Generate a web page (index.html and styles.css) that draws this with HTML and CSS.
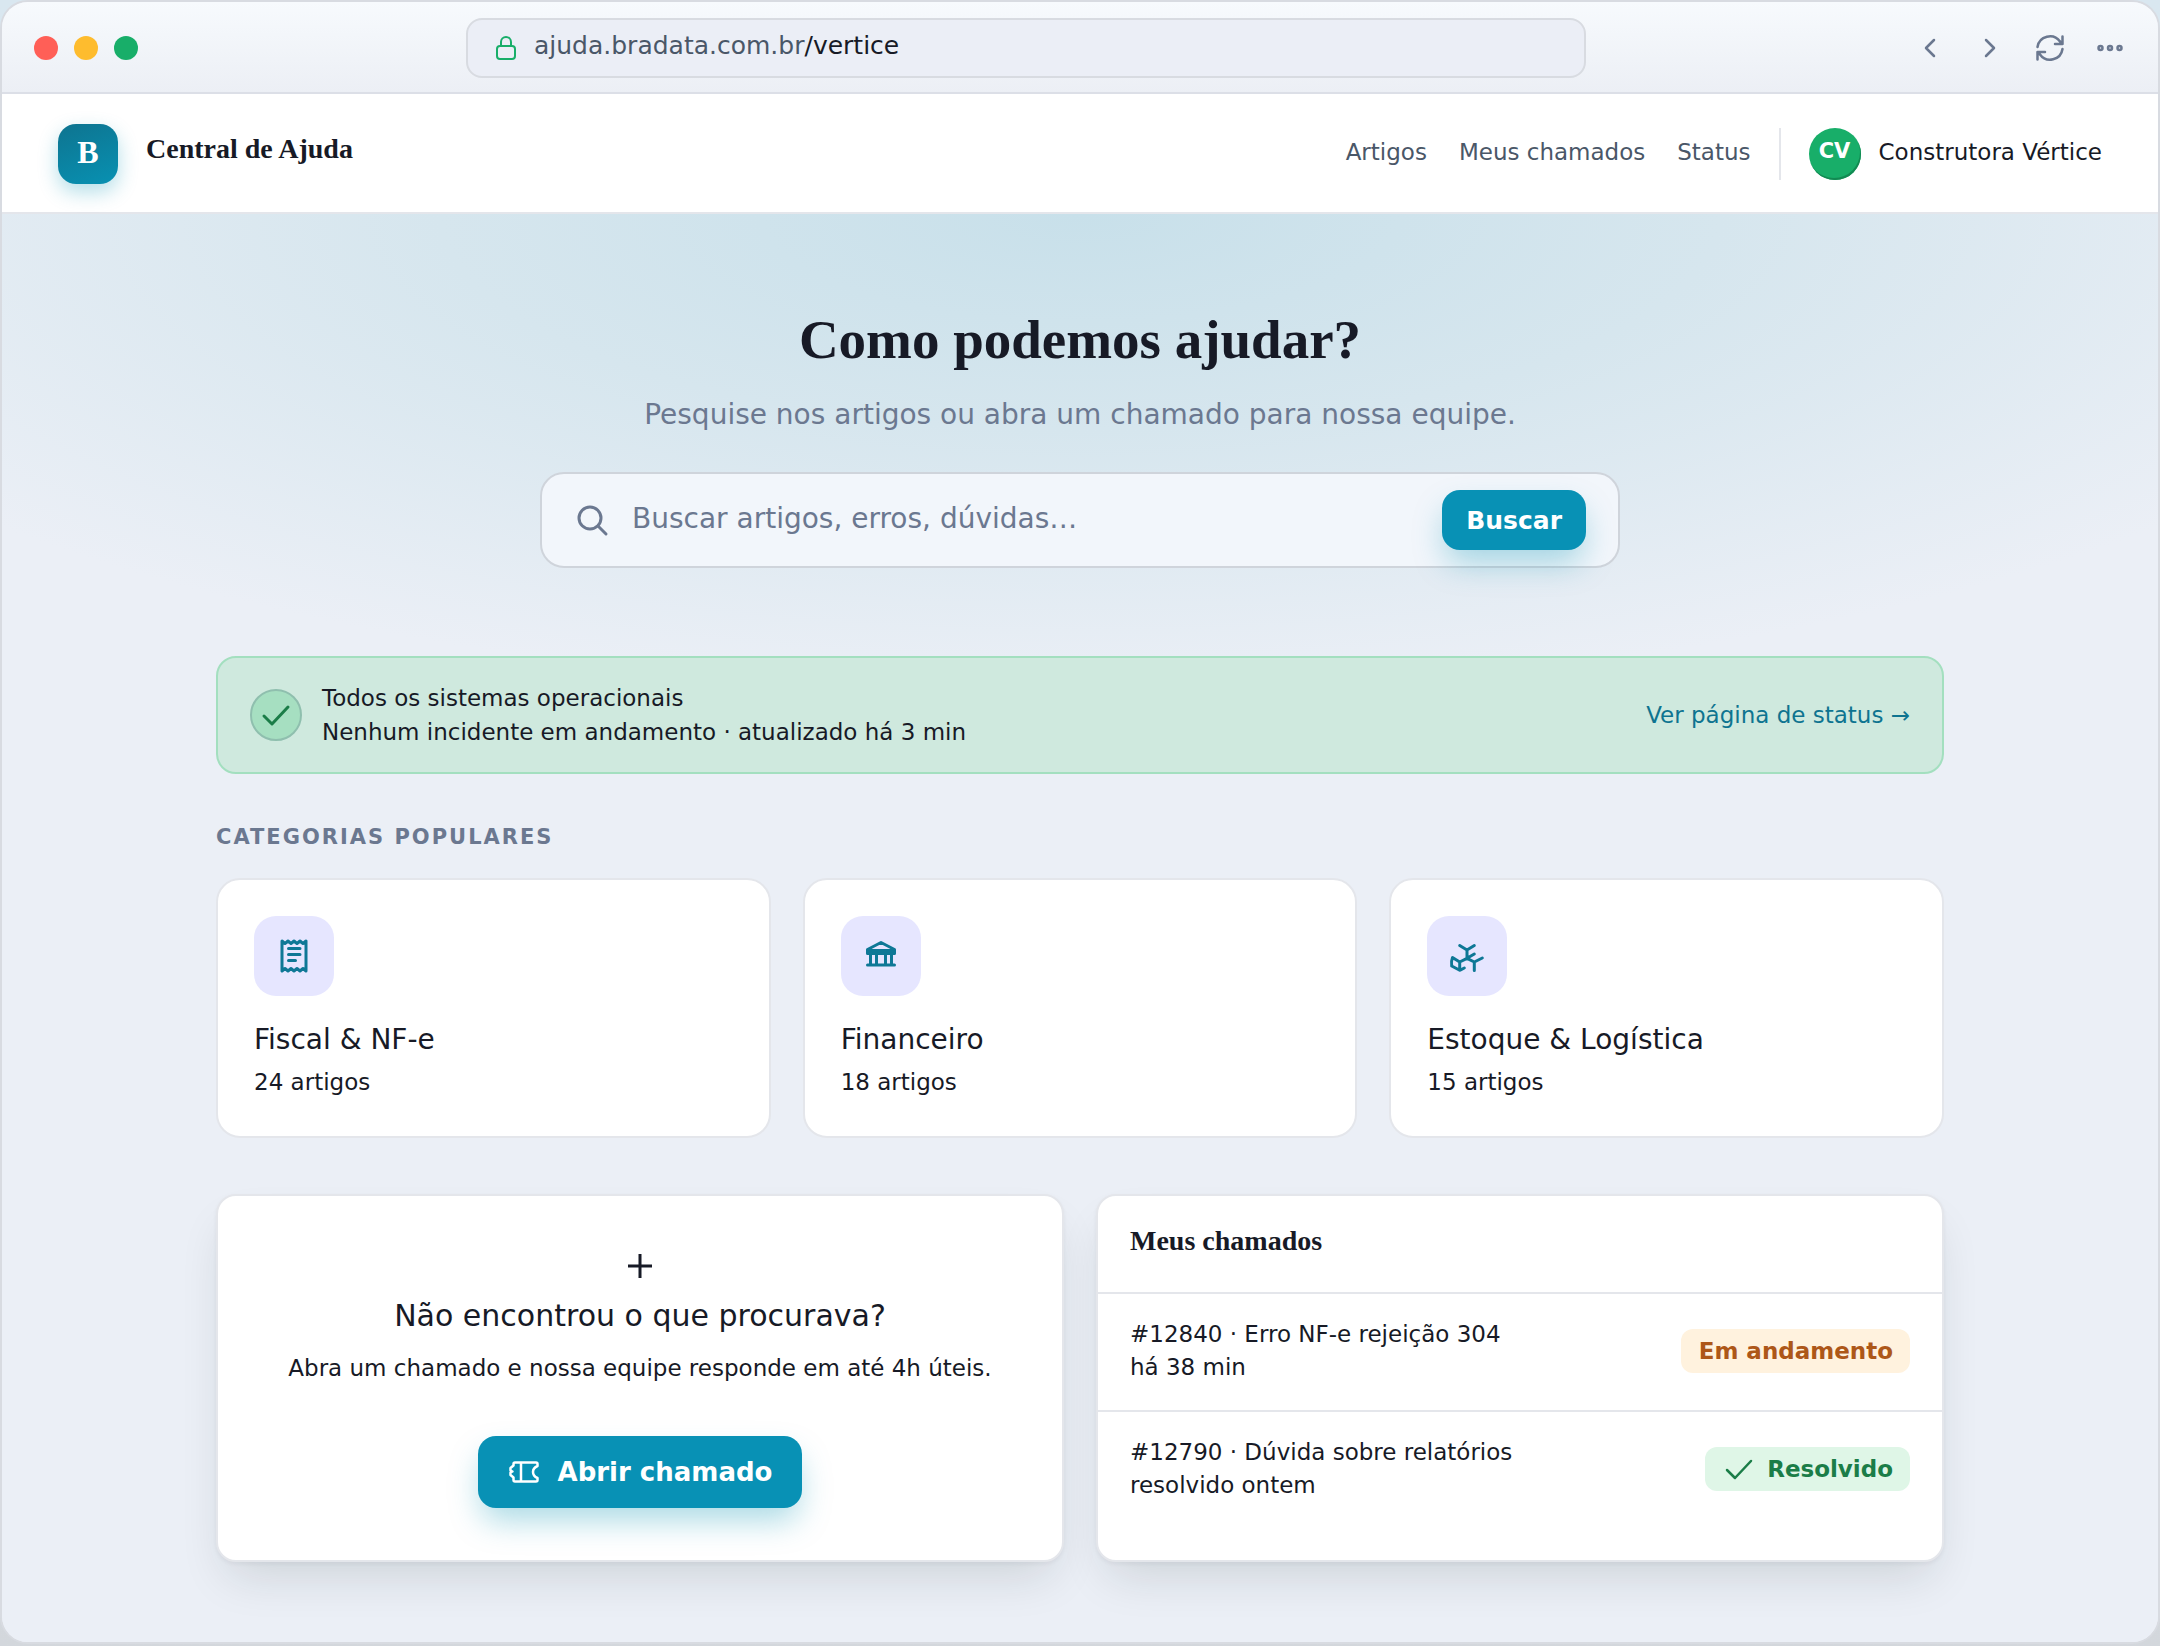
FILE: index.html
```html
<!DOCTYPE html>
<html lang="pt-BR">
<head>
    <meta charset="UTF-8">
    <meta name="viewport" content="width=device-width, initial-scale=1.0">
    <title>Central de Ajuda</title>
    <link rel="stylesheet" href="styles.css">
</head>
<body>

<div class="window">
    <div class="titlebar">
        <div class="dots">
            <span class="dot red"></span>
            <span class="dot yellow"></span>
            <span class="dot green"></span>
        </div>
        <div class="url">
            <svg class="lock" viewBox="0 0 24 28"><rect x="3" y="12" width="18" height="13" rx="3"/><path d="M7 12V8a5 5 0 0 1 10 0v4"/></svg>
            <span>ajuda.bradata.com.br<b>/vertice</b></span>
        </div>
        <div class="controls">
            <button type="button" aria-label="Voltar"><svg viewBox="0 0 32 32"><path d="M20 8l-8 8 8 8"/></svg></button>
            <button type="button" aria-label="Avançar"><svg viewBox="0 0 32 32"><path d="M12 8l8 8-8 8"/></svg></button>
            <button type="button" aria-label="Recarregar"><svg viewBox="0 0 32 32"><path d="M3.5 15A12.5 12.5 0 0 1 26 9.5L28.5 12M28.5 4.5V12H21M28.5 17A12.5 12.5 0 0 1 6 22.5L3.5 20M3.5 27.5V20H11"/></svg></button>
            <button type="button" aria-label="Mais"><svg viewBox="0 0 32 32"><circle cx="6.5" cy="16" r="2"/><circle cx="16" cy="16" r="2"/><circle cx="25.5" cy="16" r="2"/></svg></button>
        </div>
    </div>

    <header class="header">
        <div class="logo">B</div>
        <div class="brand">Central de Ajuda</div>
        <nav class="nav">
            <a href="#">Artigos</a>
            <a href="#">Meus chamados</a>
            <a href="#">Status</a>
        </nav>
        <div class="account">
            <span class="avatar">CV</span>
            <span>Construtora Vértice</span>
        </div>
    </header>

    <main>
        <section class="hero">
            <h1>Como podemos ajudar?</h1>
            <p>Pesquise nos artigos ou abra um chamado para nossa equipe.</p>
            <form class="search">
                <svg viewBox="0 0 36 36"><circle cx="16" cy="16" r="11"/><path d="M24 24l8 8"/></svg>
                <input type="search" aria-label="Buscar" placeholder="Buscar artigos, erros, dúvidas…">
                <button type="button" class="btn">Buscar</button>
            </form>
        </section>

        <div class="container">
            <div class="status">
                <span class="status-icon"><svg viewBox="0 0 32 32"><path d="M4 17l8 8L28 8"/></svg></span>
                <div class="status-text">
                    <div>Todos os sistemas operacionais</div>
                    <div>Nenhum incidente em andamento · atualizado há 3 min</div>
                </div>
                <a href="#">Ver página de status →</a>
            </div>

            <h2 class="section-title">Categorias populares</h2>
            <div class="categories">
                <a href="#" class="category">
                    <span class="tile"><svg viewBox="0 0 36 36"><path d="M6 3l3 2.5 3-2.5 3 2.5 3-2.5 3 2.5 3-2.5 3 2.5 3-2.5v30l-3-2.5-3 2.5-3-2.5-3 2.5-3-2.5-3 2.5-3-2.5-3 2.5zM12.5 10.5H24M12.5 16.5H24M12.5 22.5H19.5"/></svg></span>
                    <h3>Fiscal &amp; NF-e</h3>
                    <p>24 artigos</p>
                </a>
                <a href="#" class="category">
                    <span class="tile"><svg viewBox="0 0 36 36"><path d="M4.5 11.5L18 4.5l13.500 7v4h-27zM4.5 12.5h27M7.5 16v11M13.5 16v11M22.5 16v11M28.5 16v11M4.5 27h27"/></svg></span>
                    <h3>Financeiro</h3>
                    <p>18 artigos</p>
                </a>
                <a href="#" class="category">
                    <span class="tile"><svg viewBox="0 0 36 36"><path d="M10.7 7.5L18 12l7.3-4.5M18 12v8.3l7.3-4.3M18 20.3L10.7 24l-7.2-4.5c-1.200 3-1.200 6-.8 8.500l8 4.300 4.600-2.300M10.7 24v8.300M18 20.300l7.300 3.700 8-4M25.300 24v8.500"/></svg></span>
                    <h3>Estoque &amp; Logística</h3>
                    <p>15 artigos</p>
                </a>
            </div>

            <div class="panels">
                <section class="panel open-ticket">
                    <svg class="plus" viewBox="0 0 32 32"><path d="M16 4v24M4 16h24"/></svg>
                    <h3>Não encontrou o que procurava?</h3>
                    <p>Abra um chamado e nossa equipe responde em até 4h úteis.</p>
                    <button type="button" class="btn btn-large">
                        <svg viewBox="0 0 32 32"><path d="M7 6.5h21c1 0 1.5.5 1.5 1.5v2c-6 2.5-6 9.5 0 12v2c0 1-.5 1.5-1.5 1.5H7c-1 0-1.5-.5-1.5-1.5v-2.5L2.5 19v-2.5l2-1-2-1V12l3-2.5V8c0-1 .5-1.5 1.5-1.5zM13 6.5v19"/></svg>
                        Abrir chamado
                    </button>
                </section>

                <section class="panel">
                    <h2 class="panel-title">Meus chamados</h2>
                    <div class="ticket">
                        <div>
                            <div>#12840 · Erro NF-e rejeição 304</div>
                            <div>há 38 min</div>
                        </div>
                        <span class="badge pending">Em andamento</span>
                    </div>
                    <div class="ticket">
                        <div>
                            <div>#12790 · Dúvida sobre relatórios</div>
                            <div>resolvido ontem</div>
                        </div>
                        <span class="badge done"><svg viewBox="0 0 32 32"><path d="M4 17l8 8L28 8"/></svg>Resolvido</span>
                    </div>
                </section>
            </div>
        </div>
    </main>
</div>

</body>
</html>
```
FILE: styles.css
```css
* { margin: 0; padding: 0; box-sizing: border-box; }
body {
    font-family: "DejaVu Sans", sans-serif;
    font-size: 23px;
    line-height: 34px;
    color: #171a26;
    background: linear-gradient(180deg, #d9e7f0 0%, #dfe6ef 50%, #d3d7dc 100%);
    min-height: 100vh;
    padding-bottom: 2px;
}
a { color: inherit; text-decoration: none; }
button, input { font-family: inherit; border: none; background: none; }
button { cursor: pointer; }
svg { fill: none; stroke: currentColor; stroke-width: 2.5; stroke-linecap: round; stroke-linejoin: round; flex-shrink: 0; }

.window {
    min-height: calc(100vh - 2px);
    background: #ebeff6;
    border: 2px solid #d8dbe1;
    border-radius: 28px;
    overflow: hidden;
}

/* browser bar */
.titlebar {
    display: flex;
    align-items: center;
    justify-content: space-between;
    gap: 32px;
    height: 92px;
    padding: 2px 32px 0;
    background: linear-gradient(180deg, #f7fafd 0%, #eceff5 100%);
    border-bottom: 2px solid #dcdfe7;
}
.dots { display: flex; gap: 16px; }
.dot { width: 24px; height: 24px; border-radius: 50%; }
.red { background: #ff5f57; }
.yellow { background: #febc2e; }
.green { background: #18ae69; }
.url {
    display: flex;
    align-items: center;
    flex: 0 1 1120px;
    gap: 16px;
    height: 60px;
    padding: 0 26px 4px;
    background: #ebeef6;
    border: 2px solid #d8dbe1;
    border-radius: 16px;
    font-size: 25px;
    color: #4a5768;
}
.url b { font-weight: normal; color: #171a26; }
.lock { width: 24px; height: 28px; margin-top: 4px; color: #18ae69; stroke-width: 2; }
.controls { display: flex; gap: 28px; color: #6b7890; }
.controls button { width: 32px; height: 32px; color: inherit; }
.controls svg { display: block; width: 32px; height: 32px; }

/* header */
.header {
    display: flex;
    align-items: center;
    height: 120px;
    padding: 2px 56px 0;
    background: #fff;
    border-bottom: 2px solid #e4e6eb;
}
.logo {
    width: 60px;
    height: 60px;
    border-radius: 18px;
    background: linear-gradient(160deg, #0e7490, #0891b2);
    box-shadow: 0 8px 20px rgba(8, 145, 178, 0.3);
    color: #fff;
    font: bold 32px/56px "Liberation Serif", serif;
    text-align: center;
}
.brand { font: bold 28px/36px "Liberation Serif", serif; margin: 0 auto 10px 28px; }
.nav { display: flex; gap: 32px; padding: 0 28px 4px 0; color: #4a5768; }
.account {
    display: flex;
    align-items: center;
    gap: 18px;
    padding-left: 28px;
    border-left: 2px solid #e4e6eb;
}
.account span:last-child { padding-bottom: 4px; }
.avatar {
    width: 52px;
    height: 52px;
    border-radius: 50%;
    background: #18ae69;
    box-shadow: inset -1px -2px 0 #128a52;
    color: #fff;
    font-size: 21px;
    font-weight: bold;
    line-height: 46px;
    text-align: center;
}

/* hero */
main { background: radial-gradient(ellipse 66% 480px at 50% 0, #c8e0ea 0%, #d6e6ee 45%, #ebeff6 100%); }
.hero { padding: 94px 32px 88px; text-align: center; }
.hero h1 { font: bold 55px/64px "Liberation Serif", serif; margin-bottom: 23px; }
.hero p { font-size: 28px; line-height: 40px; color: #6b7890; margin-bottom: 37px; }
.search {
    display: flex;
    align-items: center;
    max-width: 1080px;
    height: 96px;
    margin: auto;
    padding: 0 32px;
    background: #f2f6fb;
    border: 2px solid #cfd4db;
    border-radius: 24px;
}
.search svg { width: 36px; height: 36px; stroke-width: 3; color: #6b7890; }
.search input { flex: 1; height: 60px; padding: 0 22px 4px; font-size: 28px; color: #171a26; outline: none; }
.search input::placeholder { color: #6b7890; opacity: 1; }
.btn {
    height: 60px;
    padding: 0 24px;
    border-radius: 18px;
    background: #0891b5;
    box-shadow: 0 16px 32px -4px rgba(8, 145, 178, 0.35);
    color: #fff;
    font-size: 25px;
    font-weight: bold;
}
.btn-large {
    display: inline-flex;
    align-items: center;
    gap: 18px;
    height: 72px;
    padding: 0 30px;
    font-size: 26px;
}
.btn-large svg { width: 32px; height: 32px; }

/* content */
.container { max-width: 1728px; margin: auto; padding-bottom: 80px; }
.status {
    display: flex;
    align-items: center;
    gap: 20px;
    padding: 23px 32px;
    background: #cfe9de;
    border: 2px solid #a3dfbf;
    border-radius: 20px;
}
.status-icon {
    display: flex;
    align-items: center;
    justify-content: center;
    width: 52px;
    height: 52px;
    border: 2px solid #8fbfae;
    border-radius: 50%;
    background: #a6dfc1;
    color: #1b7d48;
}
.status-icon svg { width: 32px; height: 32px; stroke-width: 3; }
.status-text { flex: 1; }
.status a { color: #0e7490; }
.section-title {
    margin: 48px 0 26px;
    font-size: 21px;
    line-height: 30px;
    letter-spacing: 2px;
    text-transform: uppercase;
    color: #6b7890;
}
.categories { display: grid; grid-template-columns: repeat(3, 1fr); gap: 32px; }
.category { padding: 36px; background: #fff; border: 2px solid #e4e6eb; border-radius: 24px; }
.tile {
    display: flex;
    align-items: center;
    justify-content: center;
    width: 80px;
    height: 80px;
    border-radius: 22px;
    background: #e6e6ff;
    color: #0e7896;
}
.tile svg { width: 36px; height: 36px; stroke-width: 3; }
.category h3 { margin: 24px 0 5px; font-size: 28px; font-weight: normal; line-height: 40px; }
.category p { margin-bottom: 1px; }

.panels { display: grid; grid-template-columns: 1fr 1fr; gap: 32px; margin-top: 56px; }
.panel {
    background: #fff;
    border: 2px solid #e4e6eb;
    border-radius: 20px;
    box-shadow: 0 2px 4px rgba(23, 26, 38, 0.05), 0 24px 48px -12px rgba(23, 38, 38, 0.14);
}
.open-ticket { padding: 54px 32px 52px; text-align: center; }
.plus { display: block; width: 32px; height: 32px; margin: 0 auto 14px; stroke-width: 3; stroke-linecap: butt; }
.open-ticket h3 { font-size: 30px; font-weight: normal; line-height: 40px; margin-bottom: 15px; }
.open-ticket p { margin-bottom: 51px; }
.panel-title { padding: 27px 32px 33px; font: bold 28px/36px "Liberation Serif", serif; }
.ticket {
    display: flex;
    align-items: center;
    justify-content: space-between;
    padding: 24px 32px 26px;
    border-top: 2px solid #e4e6eb;
    line-height: 33px;
}
.badge {
    display: flex;
    align-items: center;
    gap: 12px;
    height: 44px;
    padding: 0 17px 0 18px;
    border-radius: 12px;
    font-weight: bold;
}
.badge svg { width: 32px; height: 32px; }
.pending { background: #fff2de; color: #ad5718; }
.done { background: #dff6e7; color: #1b7d48; }
```
